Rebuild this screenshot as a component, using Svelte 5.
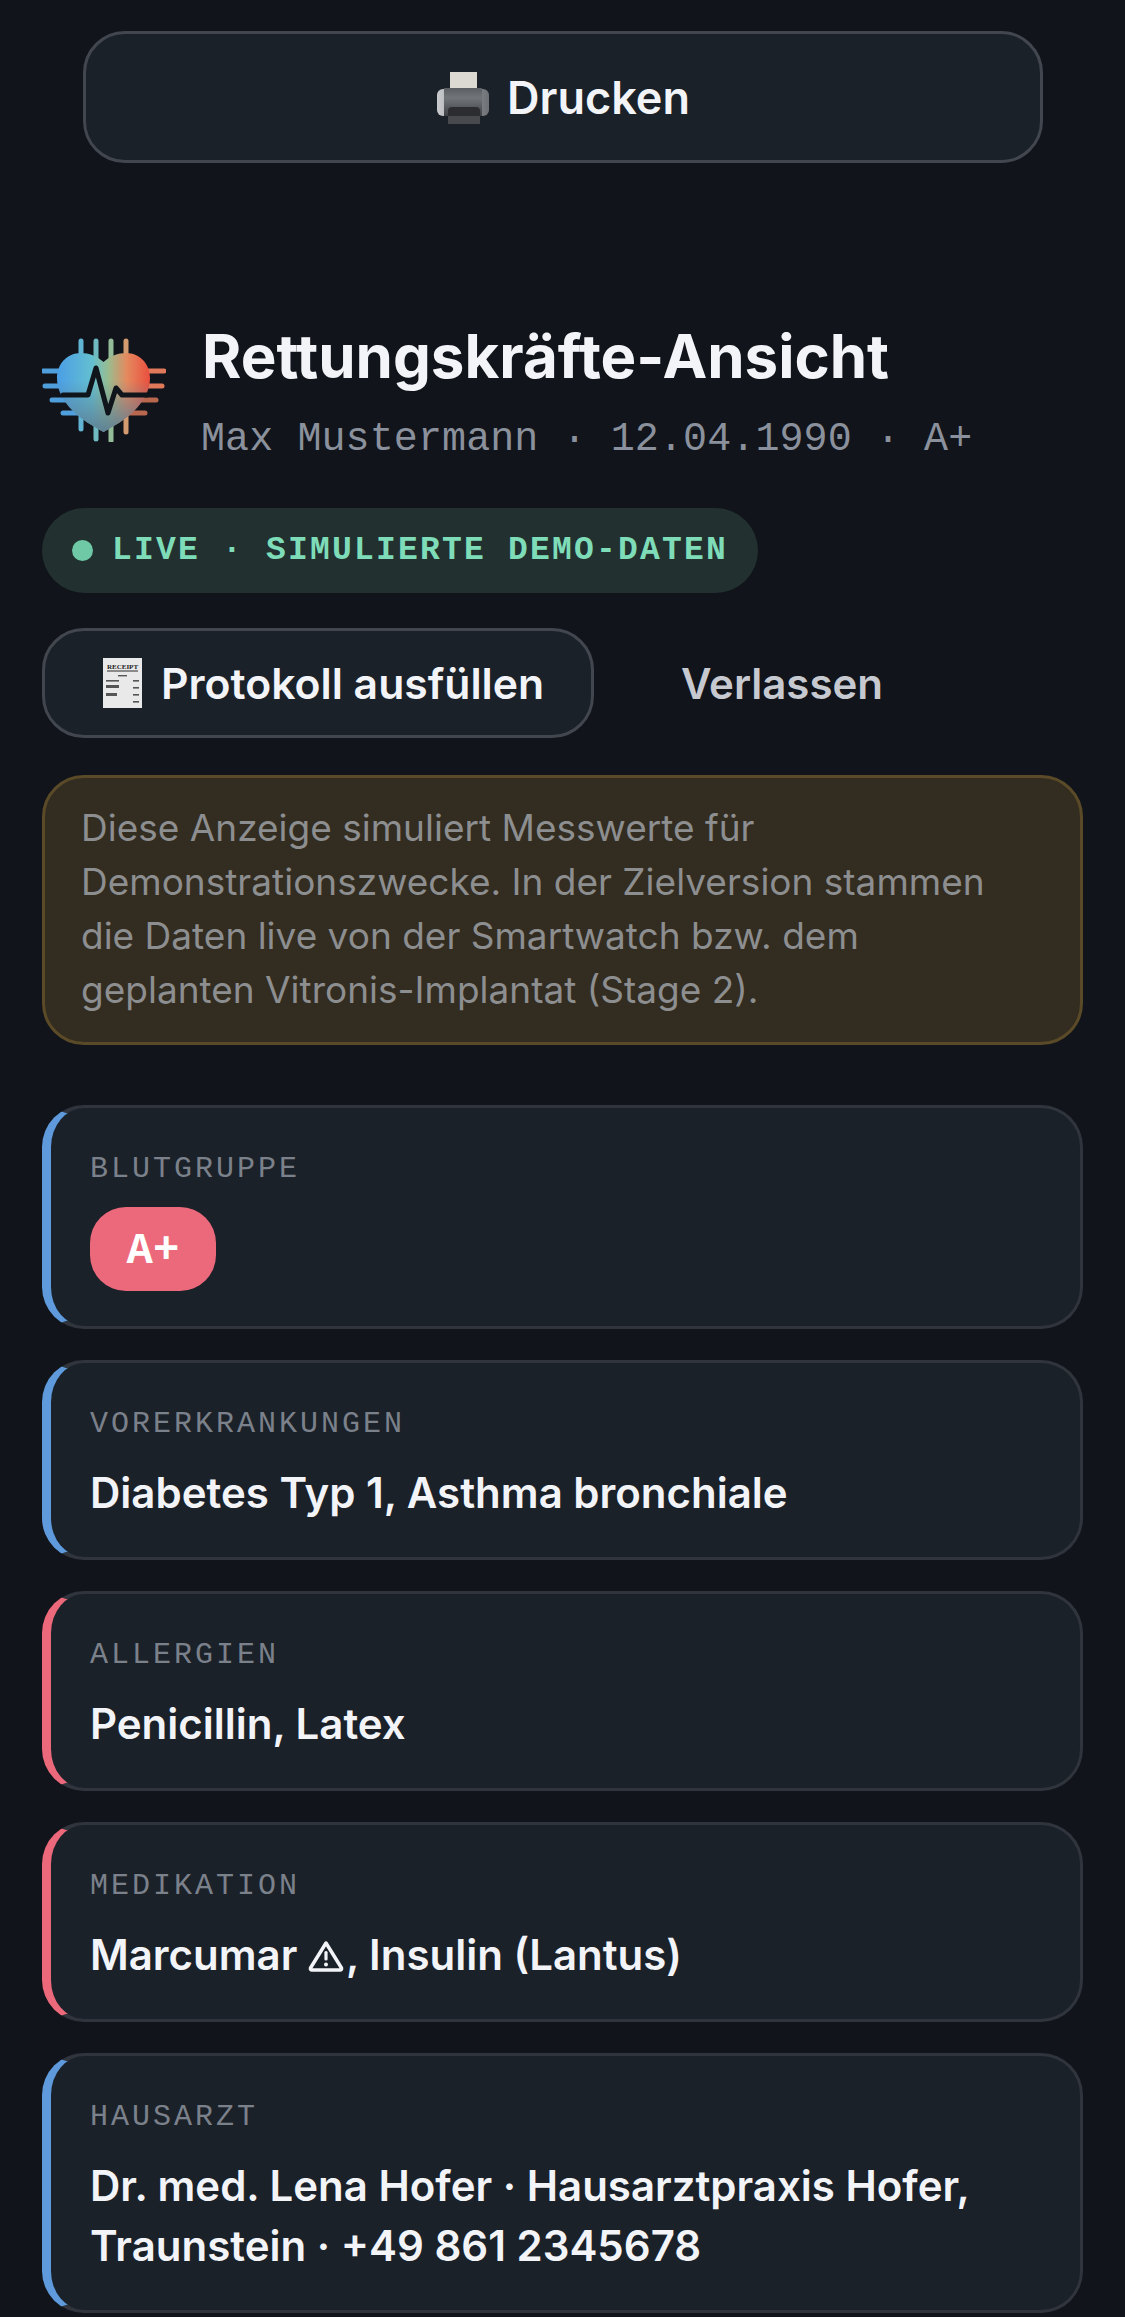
<script>
  const cards = [
    { label: 'VORERKRANKUNGEN', value: 'Diabetes Typ 1, Asthma bronchiale', tone: 'blue' },
    { label: 'ALLERGIEN', value: 'Penicillin, Latex', tone: 'red' }
  ];
  const heartPath = 'M73.5 52 C67 46 59 43 51 43 C37 43 27 54 27 68 C27 80 33 91 43 101 C52 110 63 116 73.5 122 C84 116 95 110 104 101 C114 91 120 80 120 68 C120 54 110 43 96 43 C88 43 80 46 73.5 52 Z';
  const leftPins = [[61, 13, 30], [76, 15, 30], [90, 22, 45], [103, 33, 50]];
  const rightPins = [[61, 134, 116], [76, 132, 116], [90, 126, 105], [103, 115, 98]];
  const verticalPins = [[51, 119, '#62b4d4'], [66, 129, '#6fb9c0'], [81, 131, '#94bc98'], [96, 122, '#d49a70']];
</script>

<main>
  <button class="print">
    <svg class="printer" viewBox="0 0 54 54" aria-hidden="true">
      <defs>
        <linearGradient id="prBody" x1="0" y1="0" x2="0" y2="1">
          <stop offset="0" stop-color="#5a5e63" /><stop offset="0.35" stop-color="#72767b" /><stop offset="1" stop-color="#3e4044" />
        </linearGradient>
        <linearGradient id="prSide" x1="0" y1="0" x2="1" y2="0">
          <stop offset="0" stop-color="#c9cbce" /><stop offset="1" stop-color="#6d7074" />
        </linearGradient>
      </defs>
      <rect x="14" y="2" width="27" height="20" fill="#dcd9d2" />
      <rect x="1" y="19" width="52" height="27" rx="6" fill="url(#prSide)" />
      <path d="M8 18 H46 V46 H8 Z" fill="url(#prBody)" />
      <path d="M12 41 Q12 37 16 37 H40 Q44 37 44 41 V54 H12 Z" fill="#2c2d30" />
      <rect x="12" y="46" width="32" height="8" fill="#48494d" />
    </svg>
    <span>Drucken</span>
  </button>

  <header class="head">
    <svg class="logo" viewBox="12 22 124 110" aria-hidden="true">
      <defs>
        <linearGradient id="heart" x1="0" y1="0" x2="1" y2="0">
          <stop offset="0" stop-color="#4a9ee6" /><stop offset="0.38" stop-color="#64bfd0" /><stop offset="0.55" stop-color="#98bd90" /><stop offset="0.75" stop-color="#e4895e" /><stop offset="1" stop-color="#ea4f3e" />
        </linearGradient>
        <linearGradient id="fade" x1="0" y1="0" x2="0" y2="1">
          <stop offset="0.35" stop-color="#5d7f95" stop-opacity="0" /><stop offset="1" stop-color="#5d7f95" stop-opacity="0.95" />
        </linearGradient>
      </defs>
      <g stroke-width="5" stroke-linecap="round" fill="none">
        {#each verticalPins as [x, end, color]}
          <line x1={x} x2={x} y1="31" y2={end} stroke={color} />
        {/each}
        {#each leftPins as [y, a, b]}
          <line x1={a} x2={b} y1={y} y2={y} stroke="#4f9fdc" />
        {/each}
        {#each rightPins as [y, a, b], i}
          <line x1={a} x2={b} y1={y} y2={y} stroke={i < 2 ? '#e0785a' : '#b9674f'} />
        {/each}
      </g>
      <path d={heartPath} fill="url(#heart)" />
      <path d={heartPath} fill="url(#fade)" />
      <polyline points="33,85 58,85 66,58 78,103 86,78 92,85 117,85" fill="none" stroke="#10141b" stroke-width="5" stroke-linejoin="round" stroke-linecap="round" />
    </svg>
    <div class="head-text">
      <h1>Rettungskräfte-Ansicht</h1>
      <p>Max Mustermann · 12.04.1990 · A+</p>
    </div>
  </header>

  <div class="live"><span class="dot"></span>LIVE · SIMULIERTE DEMO-DATEN</div>

  <div class="actions">
    <button class="protocol">
      <svg class="receipt" viewBox="0 0 39 50" aria-hidden="true">
        <rect width="39" height="50" fill="#e9e9e9" />
        <text x="19.5" y="11" text-anchor="middle" class="receipt-title">RECEIPT</text>
        <rect x="4" y="12" width="31" height="2" fill="#8a8a8a" />
        <g fill="#555">
          <rect x="3" y="22" width="13" height="1.6" /><rect x="30" y="22" width="6" height="1.6" />
          <rect x="3" y="27" width="13" height="3" /><rect x="30" y="29" width="6" height="1.6" />
          <rect x="3" y="35" width="11" height="3" /><rect x="30" y="36" width="6" height="1.6" />
          <rect x="30" y="43" width="6" height="1.6" /><rect x="15" y="17" width="9" height="1.4" />
        </g>
      </svg>
      <span>Protokoll ausfüllen</span>
    </button>
    <button class="leave">Verlassen</button>
  </div>

  <div class="notice">
    Diese Anzeige simuliert Messwerte für Demonstrationszwecke. In der Zielversion stammen die Daten live von der Smartwatch bzw. dem geplanten Vitronis-Implantat (Stage 2).
  </div>

  <section class="cards">
    <article class="card blue">
      <div class="label">BLUTGRUPPE</div>
      <span class="blood">A+</span>
    </article>

    {#each cards as card}
      <article class="card {card.tone}">
        <div class="label">{card.label}</div>
        <div class="value">{card.value}</div>
      </article>
    {/each}

    <article class="card red">
      <div class="label">MEDIKATION</div>
      <div class="value">Marcumar <svg class="warn" viewBox="0 0 36 32" aria-hidden="true">
          <path d="M18 3 L33.5 28 Q34 30 32 30 H4 Q2 30 2.500 28 Z" fill="none" stroke="currentColor" stroke-width="3.500" stroke-linejoin="round" />
          <rect x="16.400" y="11" width="3.200" height="9.500" rx="1.500" fill="currentColor" />
          <circle cx="18" cy="24.500" r="2" fill="currentColor" />
        </svg>, Insulin (Lantus)</div>
    </article>

    <article class="card blue">
      <div class="label">HAUSARZT</div>
      <div class="value">Dr. med. Lena Hofer · Hausarztpraxis Hofer, Traunstein · +49 861 2345678</div>
    </article>
  </section>
</main>

<style>
  :global(body) {
    margin: 0;
    background: #11141b;
  }

  main {
    box-sizing: border-box;
    height: 2317px;
    overflow: hidden;
    padding: 31px 42px 0 42px;
    background: #11141b;
    font-family: Inter, "Noto Sans", sans-serif;
    color: #f2f4f8;
  }

  button {
    font-family: inherit;
    cursor: pointer;
  }

  .print {
    display: flex;
    align-items: center;
    justify-content: center;
    gap: 17px;
    box-sizing: border-box;
    width: 960px;
    height: 132px;
    margin: 0 0 0 41px;
    border: 3px solid #42464f;
    border-radius: 42px;
    background: #1b2129;
    color: #f2f4f8;
    font-size: 45px;
    font-weight: 600;
  }

  .printer {
    width: 54px;
    height: 54px;
  }

  .head {
    display: flex;
    align-items: center;
    gap: 35px;
    margin-top: 157px;
  }

  .logo {
    width: 124px;
    height: 110px;
    margin-bottom: 10px;
    flex: none;
  }

  h1 {
    margin: 0 0 0 1px;
    font-size: 60px;
    line-height: 72px;
    font-weight: 700;
  }

  .head-text p {
    margin: 24px 0 0;
    font-family: "Liberation Mono", monospace;
    font-size: 40px;
    line-height: 48px;
    letter-spacing: 0.1px;
    color: #8b919c;
  }

  .live {
    display: inline-flex;
    align-items: center;
    box-sizing: border-box;
    height: 85px;
    margin-top: 44px;
    padding: 0 30px;
    border-radius: 43px;
    background: #22302f;
    color: #7edcb8;
    font-family: "Liberation Mono", monospace;
    font-size: 33px;
    font-weight: 700;
    letter-spacing: 2.200px;
    white-space: nowrap;
  }

  .dot {
    width: 21px;
    height: 21px;
    margin-right: 19px;
    border-radius: 50%;
    background: #6fc8a6;
  }

  .actions {
    display: flex;
    align-items: center;
    margin-top: 35px;
  }

  .protocol {
    display: flex;
    align-items: center;
    gap: 19px;
    box-sizing: border-box;
    width: 552px;
    height: 110px;
    padding: 0 0 0 58px;
    border: 3px solid #42464f;
    border-radius: 42px;
    background: #1b2129;
    color: #f2f4f8;
    font-size: 42.700px;
    font-weight: 600;
  }

  .receipt {
    width: 39px;
    height: 50px;
    flex: none;
  }

  .receipt-title {
    font-family: "Liberation Serif", serif;
    font-size: 7px;
    font-weight: 700;
    fill: #222;
  }

  .leave {
    width: 376px;
    padding: 0;
    border: 0;
    background: none;
    color: #c6c9cf;
    font-size: 42px;
    font-weight: 600;
  }

  .notice {
    box-sizing: border-box;
    height: 270px;
    margin-top: 37px;
    padding: 23px 50px 0 36px;
    border: 3px solid #5a4a27;
    border-radius: 42px;
    background: #332c20;
    color: #8c8e90;
    font-size: 37px;
    line-height: 54px;
  }

  .cards {
    display: flex;
    flex-direction: column;
    gap: 31px;
    margin-top: 60px;
  }

  .card {
    box-sizing: border-box;
    padding: 43px 36px 34px 39px;
    border: 3px solid #30343c;
    border-left-width: 9px;
    border-radius: 42px;
    background: #1b2129;
  }

  .card.blue {
    border-left-color: #5f9bdc;
  }

  .card.red {
    border-left-color: #ec697b;
  }

  .label {
    font-family: "Liberation Mono", monospace;
    font-size: 30px;
    line-height: 36px;
    letter-spacing: 3px;
    color: #7b818b;
  }

  .value {
    margin-top: 21px;
    font-size: 42px;
    line-height: 60px;
    font-weight: 600;
    color: #f2f4f8;
  }

  .warn {
    width: 36px;
    height: 32px;
    margin-right: 2px;
    vertical-align: -2px;
  }

  .blood {
    display: flex;
    align-items: center;
    justify-content: center;
    box-sizing: border-box;
    width: 126px;
    height: 84px;
    margin: 20px 0 1px;
    padding-top: 4px;
    border-radius: 36px;
    background: #ec697b;
    color: #fff;
    font-family: "Liberation Mono", monospace;
    font-size: 44px;
    font-weight: 700;
  }
</style>
